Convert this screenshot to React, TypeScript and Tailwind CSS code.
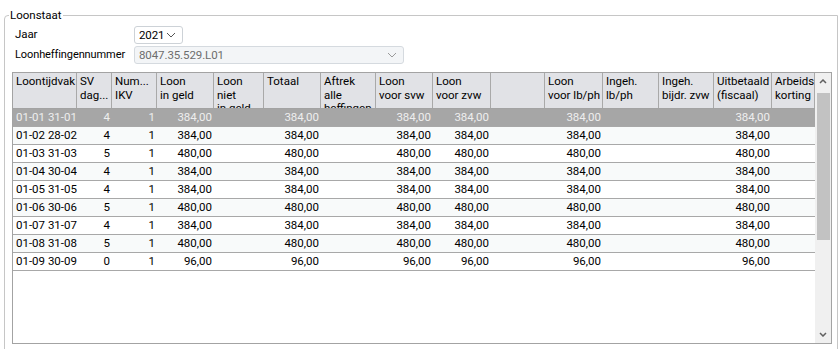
import type { ReactNode } from "react";

const COLS = "grid-cols-[64px_35px_45px_57px_50px_57px_55px_57px_58px_54px_58px_56px_55px_58px_43px]";

const headers: string[][] = [
  ["Loontijdvak"],
  ["SV", "dag..."],
  ["Num...", "IKV"],
  ["Loon", "in geld"],
  ["Loon", "niet", "in geld"],
  ["Totaal"],
  ["Aftrek", "alle", "heffingen"],
  ["Loon", "voor svw"],
  ["Loon", "voor zvw"],
  [],
  ["Loon", "voor lb/ph"],
  ["Ingeh.", "lb/ph"],
  ["Ingeh.", "bijdr. zvw"],
  ["Uitbetaald", "(fiscaal)"],
  ["Arbeids", "korting"],
];

const rows: [string, string, string, string][] = [
  ["01-01 31-01", "4", "1", "384,00"],
  ["01-02 28-02", "4", "1", "384,00"],
  ["01-03 31-03", "5", "1", "480,00"],
  ["01-04 30-04", "4", "1", "384,00"],
  ["01-05 31-05", "4", "1", "384,00"],
  ["01-06 30-06", "5", "1", "480,00"],
  ["01-07 31-07", "4", "1", "384,00"],
  ["01-08 31-08", "5", "1", "480,00"],
  ["01-09 30-09", "0", "1", "96,00"],
];

// columns that carry the amount
const amountCols = [3, 5, 7, 8, 10, 13];

function Chevron({ className }: { className?: string }) {
  return (
    <svg width="10" height="6" viewBox="0 0 10 6" className={className}>
      <polyline points="1,1 5,5 9,1" fill="none" stroke="currentColor" strokeWidth="1" />
    </svg>
  );
}

function Select({ value, disabled, className }: { value: string; disabled?: boolean; className: string }) {
  return (
    <div
      className={`flex items-center justify-between rounded-[3px] border pl-[4px] pr-[6px] ${
        disabled ? "border-[#d5dadf] bg-[#f3f5f7] text-[#6d6d6d]" : "border-[#cdd2d7] bg-white text-black"
      } ${className}`}
    >
      <span className="leading-[14px]">{value}</span>
      <Chevron className={disabled ? "text-[#9a9a9a]" : "text-[#555]"} />
    </div>
  );
}

function Cell({ children, right }: { children?: ReactNode; right?: boolean }) {
  return (
    <div className={`overflow-hidden whitespace-nowrap ${right ? "pr-[2px] text-right" : "pl-[3px]"}`}>{children}</div>
  );
}

export default function App() {
  return (
    <div className="h-[349px] w-[839px] overflow-hidden bg-white text-[11.5px] text-black [font-family:Roboto,'Liberation_Sans',sans-serif]">
      <fieldset className="ml-[4px] mr-[1px] mt-[8px] h-[360px] rounded-tl-[4px] border border-[#c6c6c6] p-0">
        <legend className="ml-[4px] px-[1px] leading-[14px] text-[11.5px]">Loonstaat</legend>

        <div className="mt-[4px] flex flex-col gap-[2px] pl-[10px] text-[11px] tracking-[-0.1px]">
          <div className="flex items-center">
            <span className="w-[119px] text-[11.5px]">Jaar</span>
            <Select value="2021" className="h-[18px] w-[49px] text-[11.5px]" />
          </div>
          <div className="flex items-center">
            <span className="w-[119px]">Loonheffingennummer</span>
            <Select value="8047.35.529.L01" disabled className="h-[18px] w-[270px] text-[11.5px]" />
          </div>
        </div>

        <div className="ml-[7px] mt-[8px] flex h-[272px] w-[820px] border border-[#a3a3a3]">
          <div className="flex w-[802px] flex-col">
            <div className={`grid h-[36px] ${COLS} border-b border-[#a3a3a3] bg-[#e1e2e6]`}>
              {headers.map((lines, i) => (
                <div key={i} className="overflow-hidden border-r border-[#a9a9a9] pl-[3px] pt-[2px] leading-[13.5px]">
                  {lines.map((l) => (
                    <div key={l} className="whitespace-nowrap">
                      {l}
                    </div>
                  ))}
                </div>
              ))}
            </div>

            {rows.map((r, idx) => {
              const selected = idx === 0;
              const bg = selected ? "bg-[#a6a6a6] text-[#eeeeee]" : idx % 2 === 1 ? "bg-[#f8fafa]" : "bg-white";
              return (
                <div key={r[0]} className={`grid h-[18px] ${COLS} items-center border-b border-[#a8a8a8] ${bg}`}>
                  {headers.map((_, c) => {
                    if (c === 0) return <Cell key={c}>{r[0]}</Cell>;
                    if (c === 1) return <Cell key={c} right>{r[1]}</Cell>;
                    if (c === 2) return <Cell key={c} right>{r[2]}</Cell>;
                    if (amountCols.includes(c)) return <Cell key={c} right>{r[3]}</Cell>;
                    return <Cell key={c} />;
                  })}
                </div>
              );
            })}
          </div>

          <div className="flex w-[16px] flex-col items-center bg-[#f0f0f0]">
            <svg width="8" height="5" viewBox="0 0 8 5" className="mt-[6px] text-[#606060]">
              <polyline points="1,4 4,1 7,4" fill="none" stroke="currentColor" strokeWidth="1.5" />
            </svg>
            <div className="ml-[1px] mt-[9px] h-[147px] w-[13px] bg-[#c2c2c2]" />
            <div className="flex-1" />
            <svg width="8" height="5" viewBox="0 0 8 5" className="mb-[6px] text-[#606060]">
              <polyline points="1,1 4,4 7,1" fill="none" stroke="currentColor" strokeWidth="1.5" />
            </svg>
          </div>
        </div>
      </fieldset>
    </div>
  );
}
